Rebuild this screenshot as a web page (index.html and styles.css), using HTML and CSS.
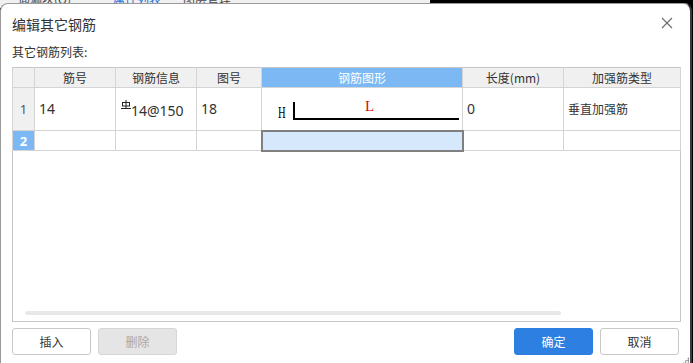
FILE: index.html
```html
<!doctype html>
<html>
  <head>
    <meta charset="utf-8" />
    <link rel="stylesheet" href="styles.css">
  </head>
  <body>
    <div class="backdrop">
      <span class="app-tab">仰漏块(Q)</span>
      <span class="app-tab app-tab-active">属性列表</span>
      <span class="app-tab">图层管理</span>
    </div>

    <div class="dialog">
      <div class="dialog-header">
        <div class="dialog-title">编辑其它钢筋</div>
        <button class="close-btn" aria-label="关闭">
          <svg width="12" height="12" viewBox="0 0 12 12">
            <path d="M1 1 L11 11 M11 1 L1 11" stroke="#6b6b6b" stroke-width="1.1" fill="none" />
          </svg>
        </button>
      </div>

      <div class="list-label">其它钢筋列表:</div>

      <div class="grid-frame">
        <table class="rebar-table">
          <colgroup>
            <col class="col-row" />
            <col class="col-no" />
            <col class="col-info" />
            <col class="col-fig" />
            <col class="col-shape" />
            <col class="col-len" />
            <col class="col-type" />
          </colgroup>
          <thead>
            <tr>
              <th></th>
              <th>筋号</th>
              <th>钢筋信息</th>
              <th>图号</th>
              <th class="th-active">钢筋图形</th>
              <th>长度(mm)</th>
              <th>加强筋类型</th>
            </tr>
          </thead>
          <tbody>
            <tr class="row-main">
              <td class="row-head">1</td>
              <td class="num">14</td>
              <td class="num">
                <span class="grade-mark">
                  <svg width="10" height="10" viewBox="0 0 10 10">
                    <rect x="1.5" y="2.5" width="7" height="3.5" fill="none" stroke="#222" stroke-width="1" />
                    <path d="M5 0 V8.5 M0 8.5 H10" stroke="#222" stroke-width="1" fill="none" />
                  </svg>
                </span>14@150
              </td>
              <td class="num">18</td>
              <td class="shape-cell">
                <div class="shape">
                  <span class="shape-h">H</span>
                  <div class="shape-bar">
                    <span class="shape-l">L</span>
                  </div>
                </div>
              </td>
              <td class="num">0</td>
              <td>垂直加强筋</td>
            </tr>
            <tr class="row-new">
              <td class="row-head row-head-active">2</td>
              <td></td>
              <td></td>
              <td></td>
              <td class="cell-selected"></td>
              <td></td>
              <td></td>
            </tr>
          </tbody>
        </table>
        <div class="h-scroll"></div>
      </div>

      <div class="dialog-footer">
        <div class="btn-group">
          <button class="btn">插入</button>
          <button class="btn" disabled>删除</button>
        </div>
        <div class="btn-group">
          <button class="btn btn-primary">确定</button>
          <button class="btn">取消</button>
        </div>
      </div>
      <div class="grip"></div>
    </div>
  </body>
</html>
```

FILE: styles.css
```css
* {
  margin: 0;
  padding: 0;
  box-sizing: border-box;
}

body {
  width: 693px;
  height: 363px;
  overflow: hidden;
  background: #000;
  font-family: 'Noto Sans CJK SC', 'Noto Sans', sans-serif;
  color: #333;
  position: relative;
}

.backdrop {
  position: absolute;
  top: 0;
  left: 0;
  width: 430px;
  height: 8px;
  background: #f0f0f0;
  display: flex;
  gap: 22px;
  padding-left: 18px;
  font-size: 12px;
  line-height: 1;
  overflow: hidden;
}

.app-tab {
  margin-top: -7px;
  color: #444;
}

.app-tab-active {
  margin-left: 20px;
  color: #1e6fd9;
}

.dialog {
  position: relative;
  margin-top: 3px;
  width: 692px;
  height: 370px;
  background: #fff;
  border: 1px solid #9a9a9a;
  border-right: 2px solid #3a3a3a;
  border-radius: 8px 8px 0 0;
  padding: 0 11px 0 11px;
}

.dialog-header {
  display: flex;
  align-items: center;
  justify-content: space-between;
  height: 38px;
}

.dialog-title {
  font-size: 14px;
  color: #333;
  padding-top: 1px;
}

.close-btn {
  border: none;
  background: none;
  width: 16px;
  height: 16px;
  margin-right: 4px;
  display: flex;
  align-items: center;
  justify-content: center;
}

.list-label {
  font-size: 12px;
  line-height: 16px;
  margin-top: 2px;
  margin-bottom: 7px;
}

.grid-frame {
  position: relative;
  width: 669px;
  height: 255px;
  border: 1px solid #c6c6c6;
  border-top: none;
}

.rebar-table {
  border-collapse: collapse;
  table-layout: fixed;
  width: 668px;
  font-size: 12px;
  margin-left: -1px;
}

.col-row { width: 22px; }
.col-no { width: 81px; }
.col-info { width: 81px; }
.col-fig { width: 65px; }
.col-shape { width: 201px; }
.col-len { width: 101px; }
.col-type { width: 117px; }

.rebar-table th {
  height: 20px;
  background: #f0f0f0;
  font-weight: normal;
  color: #333;
  border: 1px solid #d4d4d4;
  border-top: 1px solid #c6c6c6;
  text-align: center;
  line-height: 17px;
  padding: 0;
}

.rebar-table th.th-active {
  background: #7cb9f4;
  color: #fff;
}

.rebar-table td {
  border: 1px solid #d4d4d4;
  padding: 0 4px;
  color: #333;
  vertical-align: middle;
  line-height: 16px;
}

.rebar-table td.num {
  font-family: 'Noto Sans', 'Noto Sans CJK SC', sans-serif;
  font-size: 14px;
}

.row-main td {
  height: 43px;
}

.row-new td {
  height: 20px;
}

.rebar-table td.row-head {
  background: #f0f0f0;
  text-align: center;
  color: #555;
  padding: 0;
  font-family: 'Noto Sans', sans-serif;
  font-size: 13px;
}

.rebar-table td.row-head-active {
  background: #7cb9f4;
  color: #fff;
  font-weight: bold;
}

.grade-mark {
  display: inline-block;
  vertical-align: 6px;
  margin-left: 1px;
}

.grade-mark svg {
  display: block;
}

.rebar-table td.shape-cell {
  padding: 0;
}

.shape {
  display: flex;
  align-items: flex-end;
  height: 18px;
  margin-left: 16px;
  margin-top: 4px;
}

.shape-h {
  font-family: 'Liberation Serif', serif;
  font-size: 17px;
  color: #000;
  line-height: 15px;
  margin-bottom: 0;
  width: 15px;
  display: inline-block;
  transform: scaleX(0.62);
  transform-origin: left center;
}

.shape-bar {
  position: relative;
  width: 166px;
  height: 18px;
  border-left: 2px solid #000;
  border-bottom: 2px solid #000;
}

.shape-l {
  position: absolute;
  left: 70px;
  top: -3px;
  font-family: 'Liberation Serif', serif;
  font-size: 15px;
  color: #e00;
  line-height: 15px;
}

.rebar-table td.cell-selected {
  background: #d5e8fc;
  border: 2px solid #808080;
}

.h-scroll {
  position: absolute;
  left: 12px;
  bottom: 6px;
  width: 536px;
  height: 4px;
  background: #e8e8e8;
  border-radius: 2px;
}

.dialog-footer {
  display: flex;
  justify-content: space-between;
  margin-top: 6px;
  width: 667px;
}

.btn-group {
  display: flex;
  gap: 7px;
}

.btn {
  width: 79px;
  height: 27px;
  border: 1px solid #c8c8c8;
  border-radius: 3px;
  background: #fff;
  color: #333;
  font-family: 'Noto Sans CJK SC', 'Noto Sans', sans-serif;
  font-size: 12px;
}

.btn:disabled {
  background: #e5e5e5;
  color: #a8a8a8;
  border-color: #d6d6d6;
}

.btn-primary {
  background: #2d80e2;
  border-color: #2d80e2;
  color: #fff;
}

.grip {
  position: absolute;
  right: 1px;
  top: 353px;
  width: 7px;
  height: 7px;
  background: radial-gradient(circle, #777 0.8px, transparent 1.1px) 0 0 / 2.5px 2.5px;
  clip-path: polygon(100% 0, 100% 100%, 0 100%);
}
```
